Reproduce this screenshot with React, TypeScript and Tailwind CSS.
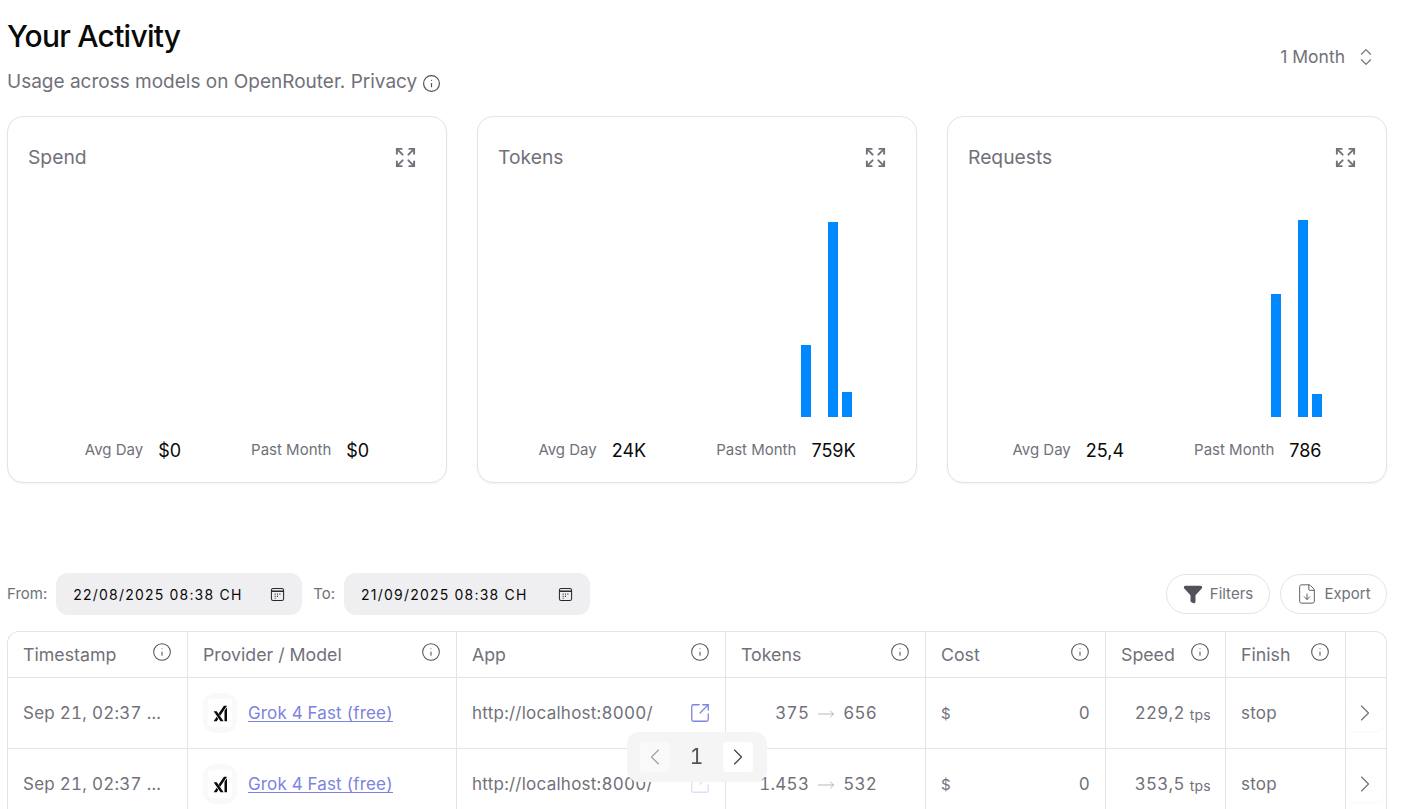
import { ChevronLeft, ChevronRight, ChevronsUpDown, Expand, FileDown, Funnel, Info, MoveRight, SquareArrowOutUpRight } from 'lucide-react'

const GRID = 'grid grid-cols-[179px_269px_269px_200px_180px_120px_120px_1fr]'
const SLOT_COUNT = 28

interface ChartCard {
  title: string
  avg: string
  total: string
  // slot index from the left -> bar height in px
  bars: Record<number, number>
}

const cards: ChartCard[] = [
  { title: 'Spend', avg: '$0', total: '$0', bars: {} },
  { title: 'Tokens', avg: '24K', total: '759K', bars: { 22: 72, 24: 195, 25: 25 } },
  { title: 'Requests', avg: '25,4', total: '786', bars: { 22: 123, 24: 197, 25: 23 } },
]

const columns = ['Timestamp', 'Provider / Model', 'App', 'Tokens', 'Cost', 'Speed', 'Finish']

const rows = [
  { input: '375', output: '656', speed: '229,2', linkClass: 'opacity-100' },
  { input: '1.453', output: '532', speed: '353,5', linkClass: 'opacity-25' },
]

function XaiLogo() {
  return (
    <svg viewBox="0 0 24 24" className="h-[17px] w-[17px]" fill="#0a0a0a">
      <path d="M2.3 8.78 12.05 23h4.33L6.63 8.78H2.3ZM6.63 16.68 2.29 23h4.34l2.17-3.16-2.17-3.16ZM16.85 1 9.36 11.93l2.17 3.16L21.18 1h-4.33ZM17.64 8.2V23h3.55V3.02L17.64 8.2Z" />
    </svg>
  )
}

function CalendarIcon() {
  return (
    <svg viewBox="0 0 16 16" className="h-[15px] w-[15px] text-[#27272a]" fill="none" stroke="currentColor">
      <rect x="1.5" y="1.5" width="13" height="13" rx="2" strokeWidth="1.1" />
      <path d="M1.5 4.5h13" strokeWidth="1.6" />
      <path d="M5 7.5h1M7.5 7.5h1M10 7.5h1M5 10h1M7.5 10h1M5 12h1" strokeWidth="1.3" />
    </svg>
  )
}

function Card({ card }: { card: ChartCard }) {
  return (
    <div className="flex h-[367px] w-[440px] flex-col rounded-2xl border border-[#e4e4e7] bg-white px-5 shadow-[0_1px_2px_rgba(0,0,0,0.05)]">
      <div className="flex h-[81px] items-center justify-between">
        <span className="text-[19.3px] text-[#71717a]">{card.title}</span>
        <Expand className="mr-[9px] h-[23px] w-[23px] text-[#71717a]" strokeWidth={2} />
      </div>
      <div className="flex h-[219px] items-end pl-[2.2px]">
        {Array.from({ length: SLOT_COUNT }).map((_, i) => (
          <div key={i} className="w-[13.67px] shrink-0">
            {card.bars[i] ? <div className="w-[10px] bg-[#0088ff]" style={{ height: card.bars[i] }} /> : null}
          </div>
        ))}
      </div>
      <div className="flex flex-1 items-start justify-center pt-[21px]">
        <span className="mt-[2px] text-[15px] leading-[20px] text-[#71717a]">Avg Day</span>
        <span className="ml-[15px] mt-[1px] text-[18px] leading-[24px] text-[#0a0a0a]">{card.avg}</span>
        <span className="ml-[70px] mt-[2px] text-[15px] leading-[20px] text-[#71717a]">Past Month</span>
        <span className="ml-[15px] mt-[1px] text-[18px] leading-[24px] text-[#0a0a0a]">{card.total}</span>
      </div>
    </div>
  )
}

function DateField({ value }: { value: string }) {
  return (
    <div className="flex h-[42px] w-[246px] items-center justify-between rounded-xl bg-[#efeff1] pl-[17px] pr-[17px] text-[14px] tracking-[1.2px] text-[#0a0a0a]">
      <span>{value}</span>
      <CalendarIcon />
    </div>
  )
}

function Row({ input, output, speed, linkClass }: { input: string; output: string; speed: string; linkClass: string }) {
  const cell = 'flex items-center border-l border-[#e4e4e7] px-[15px] pt-[2px]'
  return (
    <div className={`${GRID} h-[71px] border-t border-[#e4e4e7] text-[17px] tracking-[0.25px] text-[#71717a] tabular-nums`}>
      <div className="flex items-center whitespace-nowrap px-[15px] pt-[2px]">Sep 21, 02:37 ...</div>
      <div className={`${cell} gap-[11px]`}>
        <div className="-mt-[2px] flex h-10 w-[34px] items-center justify-center rounded-xl bg-[#f9f9fa]">
          <div className="flex h-7 w-6 items-center justify-center rounded bg-white">
            <XaiLogo />
          </div>
        </div>
        <span className="tracking-[0.15px] text-[#7c83e0] underline underline-offset-2">Grok 4 Fast (free)</span>
      </div>
      <div className={`${cell} justify-between`}>
        <span>http://localhost:8000/</span>
        <SquareArrowOutUpRight className={`-mr-[1px] -mt-[2px] h-[22px] w-[22px] text-[#7c83e0] ${linkClass}`} strokeWidth={1.4} />
      </div>
      <div className={`${cell} justify-end pr-[48px]`}>
        <span>{input}</span>
        <MoveRight className="mx-[8px] h-[18px] w-[18px] text-[#a1a1aa]" strokeWidth={1} />
        <span>{output}</span>
      </div>
      <div className={`${cell} justify-between`}>
        <span className="text-[15px]">$</span>
        <span>0</span>
      </div>
      <div className={`${cell} justify-end pr-[14px]`}>
        {speed}
        <span className="ml-[5px] text-[14px]">tps</span>
      </div>
      <div className={cell}>stop</div>
      <div className="flex items-center justify-center border-l border-[#e4e4e7] pr-[3px]">
        <div className="flex h-[36px] w-[36px] items-center justify-center rounded-lg shadow-[0_1px_2px_rgba(0,0,0,0.03)]">
          <ChevronRight className="h-7 w-7 shrink-0 text-[#71717a]" strokeWidth={1} />
        </div>
      </div>
    </div>
  )
}

export default function App() {
  return (
    <div className="relative h-[809px] w-[1402px] overflow-hidden bg-white pl-[7px] pr-[15px] font-['Inter',sans-serif]">
      <div className="flex items-start justify-between">
        <div>
          <h1 className="mt-[16px] text-[30px] font-medium leading-[40px] tracking-[-0.75px] text-[#0a0a0a]">Your Activity</h1>
          <div className="mt-[10px] flex items-center text-[19px] leading-[32px] text-[#71717a]">
            Usage across models on OpenRouter. Privacy
            <Info className="ml-[5px] mt-[3px] h-[19px] w-[19px] text-[#52525b]" strokeWidth={1.5} />
          </div>
        </div>
        <div className="mt-[45px] flex items-center pr-[10px] text-[17.5px] leading-[24px] text-[#71717a]">
          1 Month
          <ChevronsUpDown className="ml-[10px] h-[22px] w-[22px]" strokeWidth={1.25} />
        </div>
      </div>

      <div className="mt-[18px] flex gap-[30px]">
        {cards.map((card) => (
          <Card key={card.title} card={card} />
        ))}
      </div>

      <div className="mt-[90px] flex items-center justify-between">
        <div className="flex items-center text-[15px] text-[#71717a]">
          <span className="mr-[9px]">From:</span>
          <DateField value="22/08/2025 08:38 CH" />
          <span className="ml-[11px] mr-[9px]">To:</span>
          <DateField value="21/09/2025 08:38 CH" />
        </div>
        <div className="flex gap-[10px] text-[15px] text-[#71717a]">
          <button className="flex h-10 w-[104px] items-center justify-center gap-[7px] rounded-full border border-[#e4e4e7]">
            <Funnel className="h-5 w-5 fill-[#52525b] text-[#52525b]" />
            Filters
          </button>
          <button className="flex h-10 w-[107px] items-center justify-center gap-[6px] rounded-full border border-[#e4e4e7]">
            <FileDown className="h-[22px] w-[22px] text-[#52525b]" strokeWidth={1} />
            Export
          </button>
        </div>
      </div>

      <div className="mt-4 rounded-t-xl border border-b-0 border-[#e4e4e7]">
        <div className={`${GRID} h-[45px] text-[17.75px] text-[#71717a]`}>
          {columns.map((col, i) => (
            <div key={col} className={`relative flex items-center px-[15px] pt-[2px] ${i > 0 ? 'border-l border-[#e4e4e7]' : ''}`}>
              {col}
              <Info className="absolute right-[15px] top-[10px] h-5 w-5 text-[#52525b]" strokeWidth={1.25} />
            </div>
          ))}
          <div className="border-l border-[#e4e4e7]" />
        </div>
        {rows.map((row) => (
          <Row key={row.input} {...row} />
        ))}
      </div>

      <div className="absolute left-[627px] top-[732px] flex h-[50px] w-[140px] items-center justify-between rounded-xl bg-[#f4f4f5]/95 pl-[13px] pr-[14px] backdrop-blur-sm">
        <div className="flex h-[30px] w-[30px] items-center justify-center rounded bg-[#f9f9fa]">
          <ChevronLeft className="h-7 w-7 shrink-0 text-[#a1a1aa]" strokeWidth={1} />
        </div>
        <span className="text-[21px] tabular-nums text-[#52525b]">1</span>
        <div className="flex h-[30px] w-[30px] items-center justify-center rounded bg-white">
          <ChevronRight className="h-7 w-7 shrink-0 text-[#3f3f46]" strokeWidth={1} />
        </div>
      </div>
    </div>
  )
}
